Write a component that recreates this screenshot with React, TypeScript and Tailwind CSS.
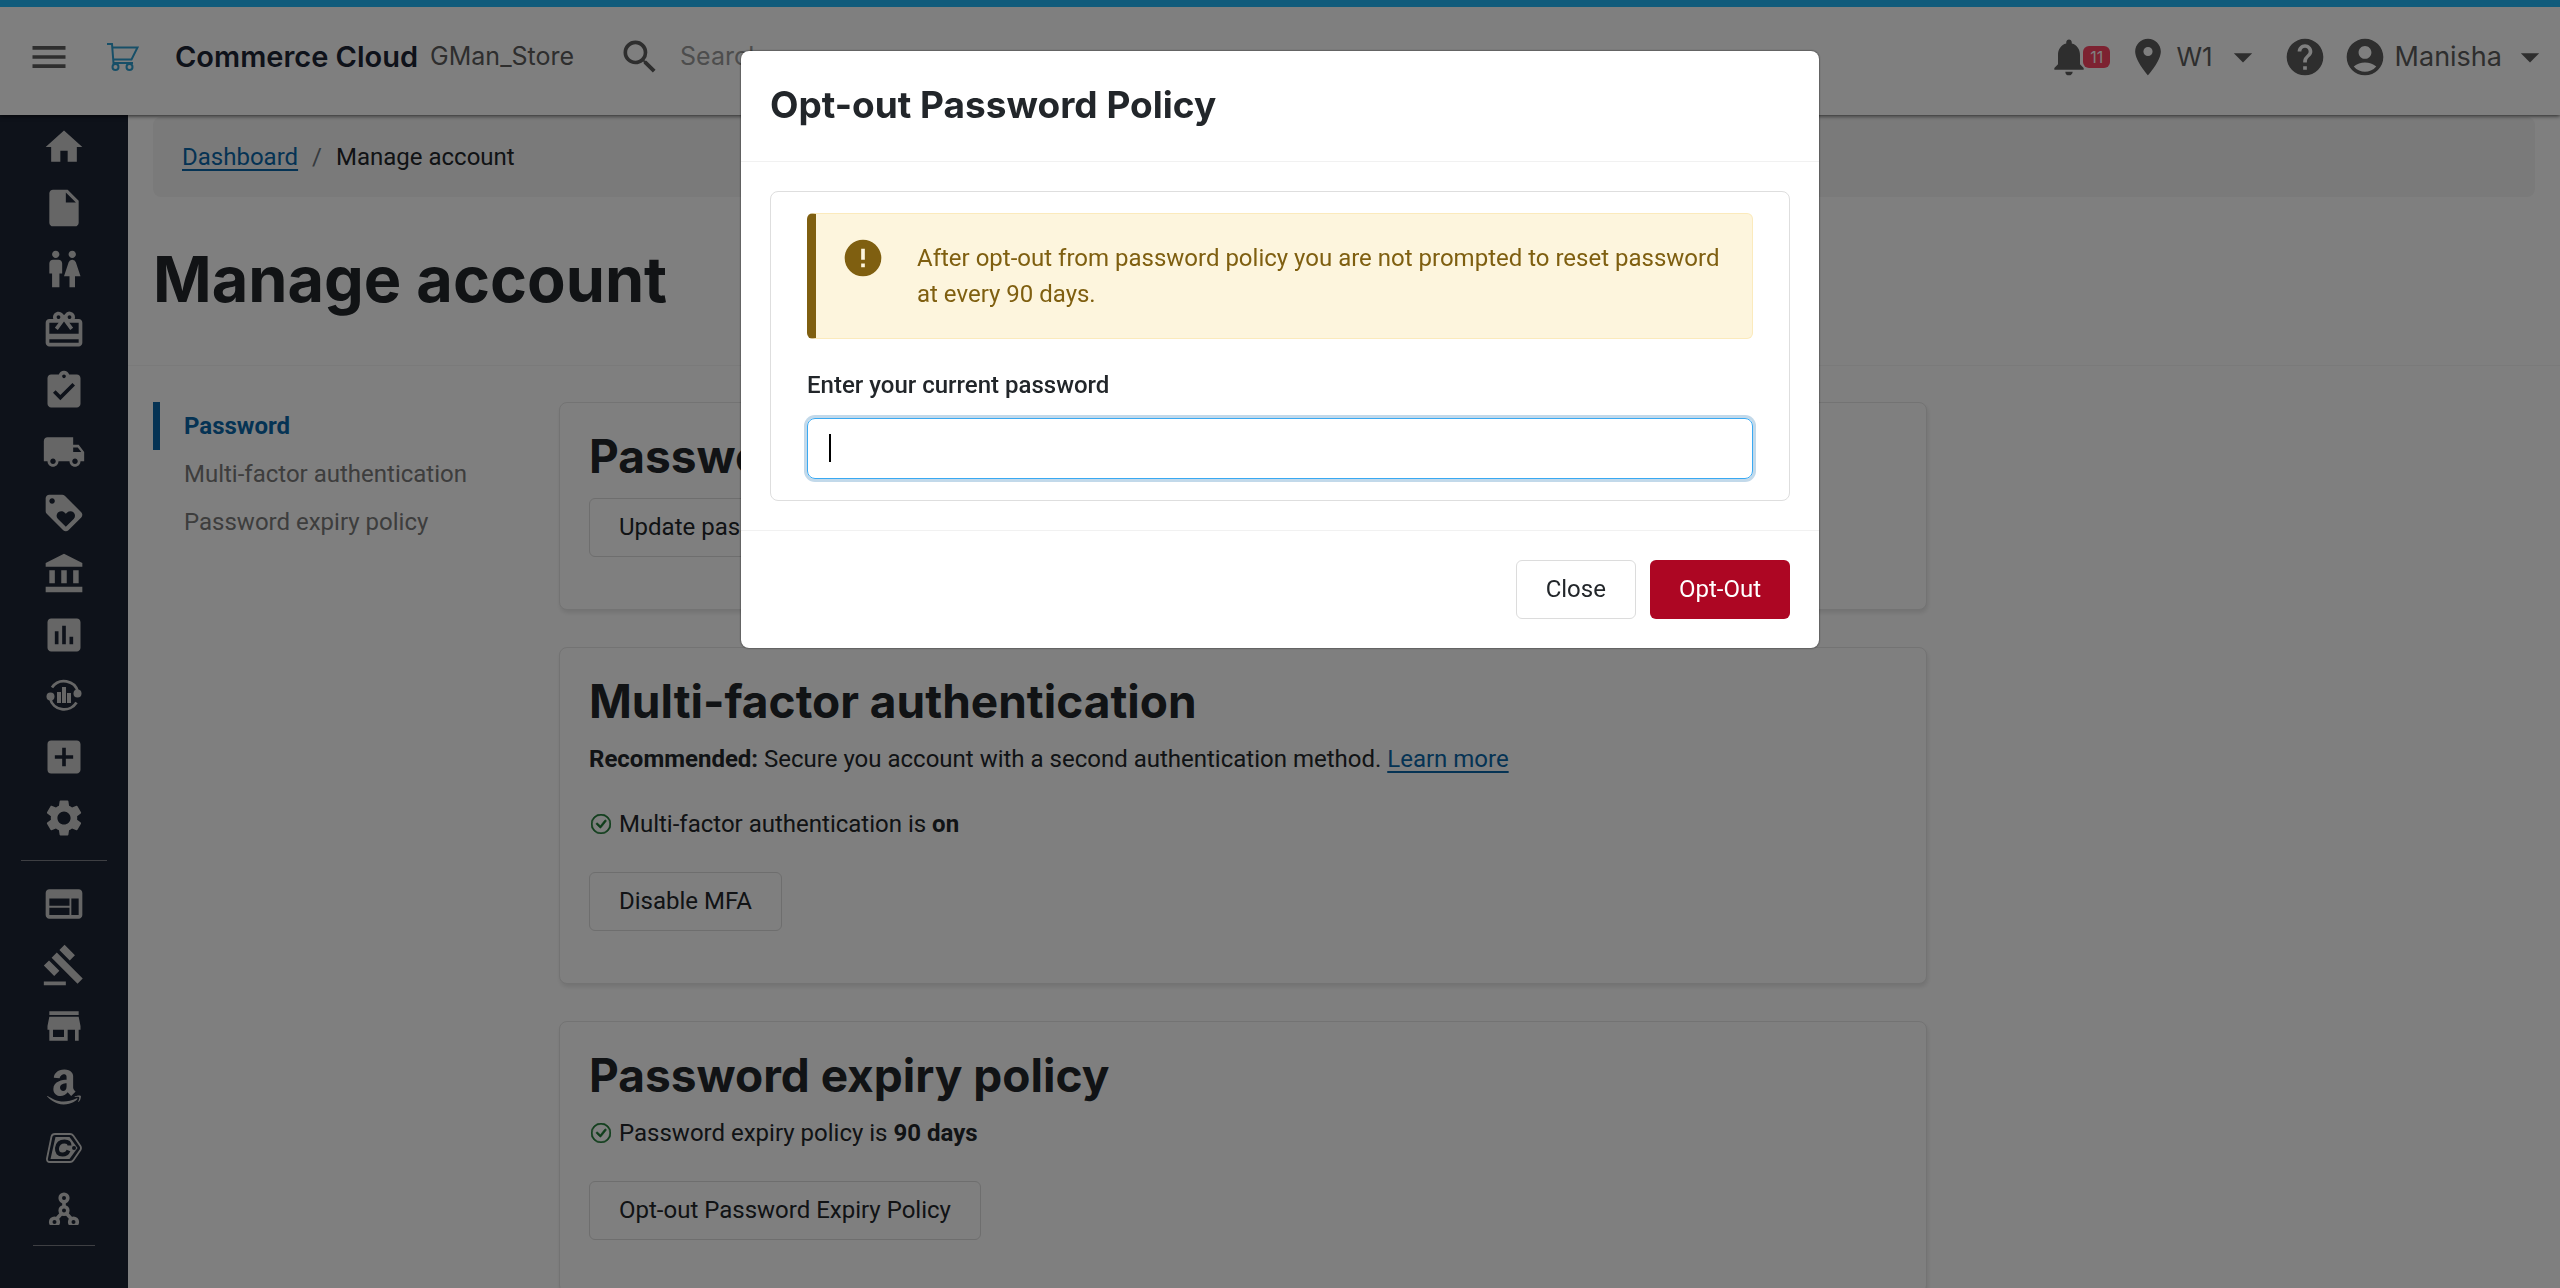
import React from 'react';
import { IconType } from 'react-icons';
import {
  MdAccountBalance,
  MdAccountCircle,
  MdAddBox,
  MdArrowDropDown,
  MdAssessment,
  MdAssignmentTurnedIn,
  MdCardGiftcard,
  MdError,
  MdGavel,
  MdHelp,
  MdHome,
  MdInsertDriveFile,
  MdLocalShipping,
  MdLocationOn,
  MdLoyalty,
  MdMenu,
  MdNotifications,
  MdSearch,
  MdSettings,
  MdStore,
  MdWc,
  MdWeb,
} from 'react-icons/md';
import { FaAmazon } from 'react-icons/fa';
import { BsCheckCircle } from 'react-icons/bs';

const HEADING = "font-['Inter',sans-serif]";

const CartIcon = () => (
  <svg viewBox="0 0 32 28" className="h-7 w-8" fill="none" stroke="#2f9fd0" strokeWidth="2">
    <path d="M0 1h5l1.500 19h19.500M5.500 4.500h25L24.500 16.500H6.500" />
    <circle cx="8.500" cy="24" r="3" />
    <circle cx="22.500" cy="24" r="3" />
  </svg>
);

const InsightsIcon = () => (
  <svg viewBox="0 0 36 36" className="size-9" fill="none" stroke="currentColor" strokeWidth="2.800">
    <path d="M6 9.500A14.500 14.500 0 0 1 32 14M30.500 24.500A14.500 14.500 0 0 1 4 20" />
    <circle cx="4.500" cy="18.500" r="4" fill="currentColor" stroke="none" />
    <circle cx="31.500" cy="15.500" r="4" fill="currentColor" stroke="none" />
    <path d="M13 14v11M18 9v16M23 15v10" strokeWidth="4" />
  </svg>
);

const PriceTagIcon = () => (
  <svg viewBox="0 0 36 30" className="h-[30px] w-9" fill="none" stroke="currentColor">
    <path d="M9 1h15q2 0 3.200 1.600l7.200 10.400q1.200 2 0 4l-7.200 10.400Q26 29 24 29H4Q.5 29 1 25.500L5.500 3.500Q6.200 1 9 1z" strokeWidth="1.800" />
    <path d="M9.500 4h14l8 11-8 11H4.500z" fill="currentColor" stroke="none" />
    <path d="M23.500 12.500q0-4-5-4-6.500 0-7.500 6.500-.5 6.500 5.500 6.500 4.500 0 6-4" stroke="#1c2434" strokeWidth="4" />
    <circle cx="28" cy="15" r="2" fill="#1c2434" stroke="none" />
  </svg>
);

const NetworkIcon = () => (
  <svg viewBox="0 0 32 33" className="h-[33px] w-8" fill="none" stroke="currentColor" strokeWidth="3.600">
    <circle cx="16" cy="6" r="3.800" />
    <circle cx="16" cy="18.500" r="3.800" />
    <circle cx="6.500" cy="30" r="3.800" />
    <circle cx="25.500" cy="30" r="3.800" />
    <path d="M16 10v5M13.500 21.500l-4.500 5M18.500 21.500l4.500 5" />
  </svg>
);

const mainNav: { label: string; icon: IconType | React.FC }[] = [
  { label: 'Home', icon: MdHome },
  { label: 'Documents', icon: MdInsertDriveFile },
  { label: 'Customers', icon: MdWc },
  { label: 'Gift cards', icon: MdCardGiftcard },
  { label: 'Orders', icon: MdAssignmentTurnedIn },
  { label: 'Shipping', icon: MdLocalShipping },
  { label: 'Promotions', icon: MdLoyalty },
  { label: 'Accounting', icon: MdAccountBalance },
  { label: 'Reports', icon: MdAssessment },
  { label: 'Insights', icon: InsightsIcon },
  { label: 'Add', icon: MdAddBox },
  { label: 'Settings', icon: MdSettings },
];

const channelNav: { label: string; icon: IconType | React.FC }[] = [
  { label: 'Webstore', icon: MdWeb },
  { label: 'Auctions', icon: MdGavel },
  { label: 'Store', icon: MdStore },
  { label: 'Amazon', icon: FaAmazon },
  { label: 'Catch', icon: PriceTagIcon },
  { label: 'Network', icon: NetworkIcon },
];

const NavItem: React.FC<{ label: string; icon: IconType | React.FC }> = ({ label, icon: Icon }) => (
  <a
    href="#"
    aria-label={label}
    className={`flex h-[61px] w-full items-center justify-center ${label === 'Amazon' ? 'text-[40px]' : 'text-[44px]'}`}
  >
    <Icon />
  </a>
);

const Sidebar = () => (
  <nav className="flex w-32 shrink-0 flex-col items-center bg-[#1c2434] pt-px text-[#cdcdcd]">
    {mainNav.map((item) => (
      <NavItem key={item.label} {...item} />
    ))}
    <hr className="my-3 w-[86px] border-[#7c7f86]" />
    {channelNav.map((item) => (
      <NavItem key={item.label} {...item} />
    ))}
    <hr className="mt-1.5 w-[62px] border-[#7c7f86]" />
  </nav>
);

const Header = () => (
  <header
    className={`relative z-10 flex h-[115px] shrink-0 items-center border-t-[7px] border-[#20b6f6] bg-white pr-2 pb-2 pl-[27px] text-2xl text-[#5c5c5c] shadow-[0_1px_4px_rgba(0,0,0,0.7)] ${HEADING}`}
  >
    <button type="button" aria-label="Menu" className="text-[44px]">
      <MdMenu />
    </button>
    <a href="#" className="ml-9 flex items-center">
      <CartIcon />
      <span className="ml-9 text-[29px] font-semibold text-[#1c2434]">Commerce Cloud</span>
    </a>
    <span className="ml-3 text-[25px]">GMan_Store</span>
    <label htmlFor="search" aria-label="Search" className="ml-11 text-[44px]">
      <MdSearch />
    </label>
    <input
      id="search"
      type="text"
      placeholder="Search"
      className="ml-[18px] min-w-0 flex-1 text-[25px] outline-none placeholder:text-[#9a9a9a]"
    />
    <button type="button" aria-label="Notifications" className="flex items-center">
      <MdNotifications className="text-[44px]" />
      <span className="-ml-2 rounded-md bg-[#fa4463] px-[7px] text-base leading-[22px] text-white">11</span>
    </button>
    <button type="button" className="ml-4 flex items-center">
      <MdLocationOn className="text-[44px]" />
      <span className="ml-1.5 text-[26px]">W1</span>
      <MdArrowDropDown className="ml-2 text-[44px]" />
    </button>
    <button type="button" aria-label="Help" className="ml-[18px] text-[44px]">
      <MdHelp />
    </button>
    <button type="button" className="ml-4 flex items-center">
      <MdAccountCircle className="text-[44px]" />
      <span className="ml-2 text-[27px]">Manisha</span>
      <MdArrowDropDown className="ml-1.5 text-[44px]" />
    </button>
  </header>
);

const OutlineButton: React.FC<{ children: React.ReactNode }> = ({ children }) => (
  <button type="button" className="h-[59px] rounded-md border border-[#dcdcdc] bg-white px-[29px] pb-0.5">
    {children}
  </button>
);

const Card: React.FC<{ title: string; children: React.ReactNode }> = ({ title, children }) => (
  <section className="rounded-lg border border-[#e6e6e6] bg-white px-[29px] pt-[25px] pb-[52px] shadow-[1px_3px_4px_rgba(0,0,0,0.1)]">
    <h2 className={`pb-0.5 text-[46px] leading-[56px] font-bold ${HEADING}`}>{title}</h2>
    {children}
  </section>
);

const Status: React.FC<{ children: React.ReactNode; value: string }> = ({ children, value }) => (
  <p className="flex items-center leading-9">
    <BsCheckCircle className="mr-2 ml-0.5 size-5 stroke-[#1d7a34] stroke-[0.5] text-[#1d7a34]" />
    <span>
      {children} <strong>{value}</strong>
    </span>
  </p>
);

const Modal = () => (
  <div className="fixed inset-0 z-20 bg-black/50 pt-[51px]">
    <div role="dialog" aria-labelledby="modal-title" className="mx-auto w-full max-w-[1078px] rounded-lg bg-white shadow-[0_0_2px_rgba(0,0,0,0.8)]">
      <div className="border-b border-[#f1f1f1] px-[29px] pt-8 pb-[34px]">
        <h3 id="modal-title" className={`text-[37px] leading-[44px] font-bold ${HEADING}`}>
          Opt-out Password Policy
        </h3>
      </div>
      <div className="p-[29px]">
        <div className="rounded-lg border border-[#dedede] px-9 py-[21px]">
          <div className="flex rounded-md border border-l-[9px] border-[#fbeabc] border-l-[#7f5f10] bg-[#fdf5dd] py-[26px] pr-6 pl-[25px] text-[#7f5f10]">
            <MdError className="-mt-1 size-11 shrink-0" />
            <p className="ml-8 leading-9">
              After opt-out from password policy you are not prompted to reset password at every 90 days.
            </p>
          </div>
          <label htmlFor="current-password" className="mt-7 block leading-9 font-medium">
            Enter your current password
          </label>
          <div className="relative mt-[15px]">
            <input
              id="current-password"
              type="password"
              className="block h-[61px] w-full rounded-lg border border-[#3aa9f2] px-[22px] caret-transparent ring-3 ring-[#c2d9ea] outline-none"
            />
            <span className="absolute top-4 left-[22px] h-7 w-0.5 bg-black" />
          </div>
        </div>
      </div>
      <div className="flex justify-end gap-3.5 border-t border-[#f1f1f1] p-[29px]">
        <OutlineButton>Close</OutlineButton>
        <button type="button" className="h-[59px] rounded-md bg-[#ad0623] px-[29px] pb-0.5 text-white">
          Opt-Out
        </button>
      </div>
    </div>
  </div>
);

const App = () => {
  return (
    <div className="flex h-screen flex-col overflow-hidden bg-white font-['Roboto',sans-serif] text-2xl text-[#22262a]">
      <Header />
      <div className="flex min-h-0 flex-1">
        <Sidebar />
        <main className="min-w-0 flex-1 pt-0.5">
          <nav aria-label="Breadcrumb" className="mx-[25px] flex h-20 items-center gap-3.5 rounded-lg bg-[#f5f5f5] px-[29px]">
            <a href="#" className="text-[#0a67a8] underline underline-offset-4">
              Dashboard
            </a>
            <span className="text-[#6c757d]">/</span>
            <span>Manage account</span>
          </nav>
          <h1 className={`mx-[25px] mt-[46px] mb-[50px] text-[63px] leading-[72px] font-bold ${HEADING}`}>
            Manage account
          </h1>
          <div className="flex border-t border-[#f4f4f4] px-[25px] pt-9">
            <nav aria-label="Account sections" className="flex w-[406px] shrink-0 flex-col text-[#7a7a7a]">
              <a href="#password" className="border-l-[7px] border-[#0a67a8] pl-6 leading-12 font-bold text-[#0a67a8]">
                Password
              </a>
              <a href="#mfa" className="pl-[31px] leading-12">
                Multi-factor authentication
              </a>
              <a href="#expiry" className="pl-[31px] leading-12">
                Password expiry policy
              </a>
            </nav>
            <div className="flex max-w-[1368px] flex-1 flex-col gap-[37px]">
              <Card title="Password">
                <div className="mt-3">
                  <OutlineButton>Update password</OutlineButton>
                </div>
              </Card>
              <Card title="Multi-factor authentication">
                <p className="mt-2.5 leading-9">
                  <strong>Recommended:</strong> Secure you account with a second authentication method.{' '}
                  <a href="#" className="text-[#0a67a8] underline underline-offset-4">
                    Learn more
                  </a>
                </p>
                <div className="mt-[29px] mb-[30px]">
                  <Status value="on">Multi-factor authentication is</Status>
                </div>
                <OutlineButton>Disable MFA</OutlineButton>
              </Card>
              <Card title="Password expiry policy">
                <div className="mt-2.5 mb-[30px]">
                  <Status value="90 days">Password expiry policy is</Status>
                </div>
                <OutlineButton>Opt-out Password Expiry Policy</OutlineButton>
              </Card>
            </div>
          </div>
        </main>
      </div>
      <Modal />
    </div>
  );
};

export default App;
